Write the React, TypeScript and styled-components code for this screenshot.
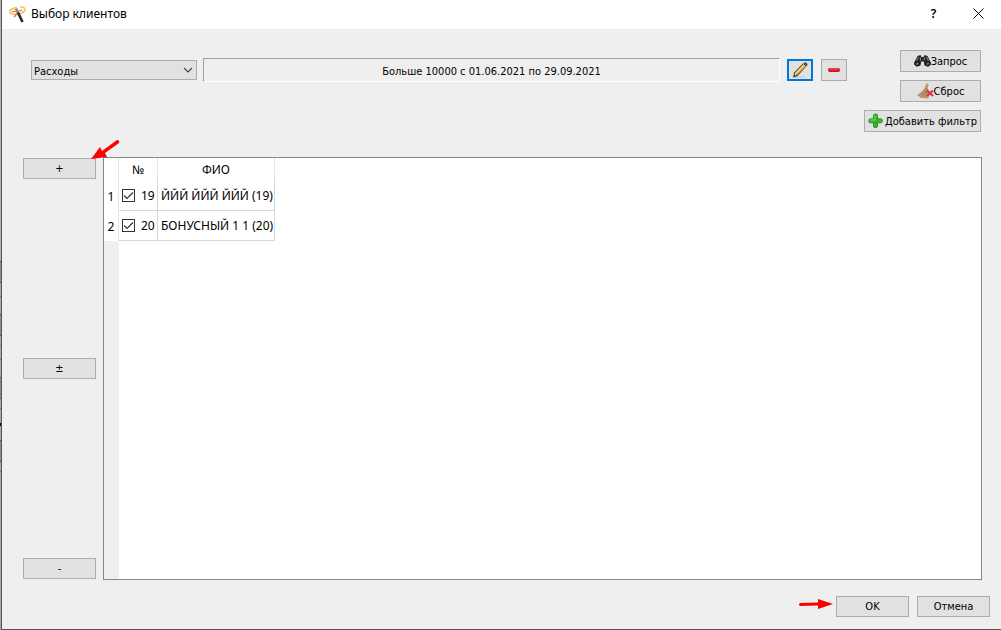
import React from "react";
import styled, { createGlobalStyle } from "styled-components";

const GlobalStyle = createGlobalStyle`
  * { box-sizing: border-box; }
  body { margin: 0; background: #efefef; }
`;

const uiFont = `11px "DejaVu Sans Condensed", "DejaVu Sans", sans-serif`;
const systemFont = `12px "Noto Sans", "Open Sans", sans-serif`;

const Backdrop = styled.div`
  min-height: 100vh;
  display: flex;
  padding-left: 1px;
  background: linear-gradient(
    #b4b4b4 261px, #555 261px 262px, #8c8c8c 262px 282px, #555 282px 283px,
    #a8a8a8 283px 296px, #777 296px 297px, #a8a8a8 297px 314px, #555 314px 315px,
    #8c8c8c 315px 335px, #555 335px 336px, #a8a8a8 336px 345px, #777 345px 346px,
    #a8a8a8 346px 359px, #777 359px 360px, #a8a8a8 360px 377px, #555 377px 378px,
    #8c8c8c 378px 398px, #555 398px 399px, #a8a8a8 399px 408px, #777 408px 409px,
    #a8a8a8 409px 423px, #000 423px 426px, #a8a8a8 426px 440px, #555 440px 441px,
    #8c8c8c 441px 461px, #555 461px 462px, #a8a8a8 462px 471px, #777 471px 472px,
    #a8a8a8 472px
  );
`;

const Dialog = styled.main`
  flex: 1;
  display: flex;
  flex-direction: column;
  background: #efefef;
  border-left: 1px solid #565656;
  border-bottom: 1px solid #565656;
  font: ${uiFont};
  color: #000;
`;

const TitleBar = styled.header`
  display: flex;
  align-items: center;
  height: 29px;
  padding: 0 0 2px 7px;
  background: #fff;
`;

const Title = styled.h1`
  flex: 1;
  margin: 0 0 0 5px;
  font: ${systemFont};
`;

const WindowButton = styled.button`
  width: 45px;
  height: 27px;
  padding: 0;
  display: flex;
  align-items: center;
  justify-content: center;
  border: 0;
  background: transparent;
  font: ${systemFont};
  font-weight: 600;
`;

const FilterBar = styled.section`
  display: flex;
  align-items: flex-start;
  padding: 21px 20px 0 29px;
`;

const FilterRow = styled.div`
  flex: 1;
  display: flex;
  align-items: center;
  margin-top: 8px;
`;

const SelectBox = styled.div`
  position: relative;
  width: 166px;
  margin-right: 6px;

  svg {
    position: absolute;
    right: 4px;
    top: 7px;
    pointer-events: none;
  }
`;

const Select = styled.select`
  display: block;
  appearance: none;
  width: 100%;
  height: 20px;
  padding: 2px 20px 0 2px;
  border: 1px solid #adadad;
  border-radius: 0;
  background: #e1e1e1;
  color: #000;
  font: ${uiFont};
`;

const Condition = styled.output`
  flex: 1;
  height: 24px;
  border: 1px solid;
  border-color: #a0a0a0 #fff #fff #a0a0a0;
  line-height: 25px;
  text-align: center;
`;

const Button = styled.button<{ $width?: number; $height?: number; $focused?: boolean; $gap?: number }>`
  display: flex;
  align-items: center;
  justify-content: center;
  gap: ${(p) => p.$gap ?? 0}px;
  width: ${(p) => (p.$width ? `${p.$width}px` : "auto")};
  height: ${(p) => p.$height ?? 21}px;
  padding: 0;
  border: ${(p) => (p.$focused ? "2px solid #0078d7" : "1px solid #adadad")};
  background: #e1e1e1;
  color: #000;
  font: ${uiFont};
  white-space: nowrap;

  svg { flex: none; }
`;

const RowActions = styled.div`
  display: flex;
  gap: 8px;
  padding-left: 7px;
`;

const QueryActions = styled.div`
  display: flex;
  flex-direction: column;
  align-items: flex-end;
  gap: 8px;
  margin-left: 17px;
`;

const Content = styled.section`
  flex: 1;
  display: flex;
  gap: 7px;
  padding: 25px 19px 0 21px;
`;

const SelectionButtons = styled.div`
  display: flex;
  flex-direction: column;
  justify-content: space-between;
  padding: 1px 0;
`;

const Pointed = styled.div`
  position: relative;
`;

const Arrow = styled.svg<{ $left: number; $top: number }>`
  position: absolute;
  left: ${(p) => p.$left}px;
  top: ${(p) => p.$top}px;
  pointer-events: none;
  fill: #ff0000;
`;

const TablePanel = styled.div`
  flex: 1;
  border: 1px solid #828790;
  background: linear-gradient(to right, #efefef 15px, #fff 15px);
`;

const Table = styled.table`
  table-layout: fixed;
  width: 171px;
  border-collapse: separate;
  border-spacing: 0;
  background: #fff;
  font: ${systemFont};

  th, td {
    padding: 0;
    border-right: 1px solid #d8d8d8;
    font-weight: 400;
    white-space: nowrap;
  }
  th { border-color: #e5e5e5; }
  thead th { height: 23px; }
  tbody td { height: 30px; border-bottom: 1px solid #d8d8d8; }
  tbody td + td { padding-left: 3px; }
`;

const CheckLabel = styled.label`
  display: flex;
  align-items: center;
  gap: 6px;
  padding-left: 3px;
`;

const CheckBox = styled.input`
  appearance: none;
  width: 13px;
  height: 13px;
  margin: 0;
  border: 1px solid #333;
  background: #fff;

  &:checked {
    background: #fff url("data:image/svg+xml,%3Csvg xmlns='http://www.w3.org/2000/svg' viewBox='0 0 11 11'%3E%3Cpath d='M1 5.5L4 8.5L10 2.5' fill='none' stroke='%23333' stroke-width='1.2'/%3E%3C/svg%3E");
  }
`;

const Footer = styled.footer`
  display: flex;
  justify-content: flex-end;
  gap: 8px;
  padding: 16px 11px 12px;
`;

const WandIcon = () => (
  <svg width="17" height="18" viewBox="0 0 17 18" fill="none" aria-hidden="true">
    <path d="M8 2.5C3 3 .5 5 1 7s4 2.600 8 2 7-2.500 7-4.500S14 1.500 11 2" stroke="#f9b560" strokeWidth="1.4" />
    <path d="M1.500 6.500C3 4.500 5 4 7 4M12 7c2-.7 3-1.500 3.500-2.500" stroke="#ffd75e" />
    <path d="M8.500 6.500L13.500 17" stroke="#262626" strokeWidth="2.600" />
    <path d="M7 3.500l2 4" stroke="#8d8d8d" strokeWidth="2.600" />
    <path d="M3 7l4-1M5 12l3-3M10 6l3-1" stroke="#df6b2f" strokeWidth="1.2" />
  </svg>
);

const PencilIcon = () => (
  <svg width="16" height="16" viewBox="0 0 16 16" aria-hidden="true">
    <path d="M3 15h10" stroke="#c8c8c8" />
    <path d="M1 15.500l1.200-5L11.500 1l3.500 2.500L5.500 14z" fill="#383321" />
    <path d="M3 11L11.200 2.600l2.200 1.800L5.200 12.900z" fill="#e2b640" />
    <path d="M3.700 11.300L11.800 3.200" stroke="#f8df83" strokeWidth="1.2" />
    <path d="M2.300 12.500l.7-1.800 2 2-1.500 1z" fill="#ddc9a3" />
    <path d="M10.800 2l3 2.500" stroke="#b7b7b7" />
    <path d="M12 .8l1.500-.6L15.600 2 15 3.500z" fill="#3a3532" />
  </svg>
);

const MinusIcon = () => (
  <svg width="16" height="16" viewBox="0 0 16 16" aria-hidden="true">
    <rect x="2.500" y="6.500" width="11" height="3" rx="1" fill="#e01523" stroke="#c01924" />
    <path d="M3.500 7h9" stroke="#f1646b" />
  </svg>
);

const BinocularsIcon = () => (
  <svg width="17" height="16" viewBox="0 0 17 16" aria-hidden="true">
    <path d="M3.500 3L6.500 2l1 2h2l1-2 3 1 3.300 6.500v2L14 13.500l-3.500-1-.8-4H7.300l-.8 4-3.500 1-2.800-2v-2z" fill="#292929" />
    <path d="M4.500 4L2.500 8M12.500 4l2 4M6.500 4.500v3M10.500 4.500v2.500" stroke="#8b8582" />
    <ellipse cx="3.200" cy="10.700" rx="2.300" ry="2.300" fill="#50433d" stroke="#111" />
    <ellipse cx="13.800" cy="10.700" rx="2.300" ry="2.300" fill="#50433d" stroke="#111" />
    <path d="M2.500 11.500L4 10M13 11.500l1.500-1.500" stroke="#b28d77" />
  </svg>
);

const BroomIcon = () => (
  <svg width="17" height="16" viewBox="0 0 17 16" aria-hidden="true">
    <path d="M9.500 0l2 1-.7 5 1.700 3-1 6.500L4 15l-4-3 5-3.500 2.500-3.500z" fill="#bd9b78" />
    <path d="M2 12.500L8 7M4.500 14L9 7.500M8 14.500l2-7M8.500 5.500l2.500 1" stroke="#94714f" strokeWidth=".8" />
    <path d="M10 7.500l6 5.500M16 7.500L10 13" stroke="#e13437" strokeWidth="2.200" />
  </svg>
);

const PlusIcon = () => (
  <svg width="16" height="16" viewBox="0 0 16 16" aria-hidden="true">
    <rect x="5.500" y="1" width="4" height="13.500" rx="1.500" fill="#35b52c" stroke="#2b9a2b" />
    <rect x=".8" y="5.800" width="13.500" height="4" rx="1.500" fill="#35b52c" stroke="#2b9a2b" />
    <path d="M6 6.300h3v3H6z" fill="#35b52c" />
    <path d="M7 2.500V7H2.500" fill="none" stroke="#83dc74" />
  </svg>
);

const clients = [
  { id: 19, name: "ЙЙЙ ЙЙЙ ЙЙЙ (19)" },
  { id: 20, name: "БОНУСНЫЙ 1 1 (20)" },
];

export default function App() {
  return (
    <Backdrop>
      <GlobalStyle />
      <Dialog>
        <TitleBar>
          <WandIcon />
          <Title>Выбор клиентов</Title>
          <WindowButton aria-label="Справка">?</WindowButton>
          <WindowButton aria-label="Закрыть">
            <svg width="11" height="11" viewBox="0 0 11 11" aria-hidden="true">
              <path d="M.5.5l10 10M10.5.5l-10 10" stroke="#000" />
            </svg>
          </WindowButton>
        </TitleBar>

        <FilterBar>
          <FilterRow>
            <SelectBox>
              <Select aria-label="Фильтр" defaultValue="Расходы">
                <option>Расходы</option>
              </Select>
              <svg width="10" height="7" viewBox="0 0 10 7" aria-hidden="true">
                <path d="M1 1l4 4 4-4" fill="none" stroke="#444" strokeWidth="1.1" />
              </svg>
            </SelectBox>
            <Condition>Больше 10000 с 01.06.2021 по 29.09.2021</Condition>
            <RowActions>
              <Button $width={26} $height={22} $focused aria-label="Изменить"><PencilIcon /></Button>
              <Button $width={26} $height={22} aria-label="Удалить"><MinusIcon /></Button>
            </RowActions>
          </FilterRow>
          <QueryActions>
            <Button $width={81} $height={22}><BinocularsIcon />Запрос</Button>
            <Button $width={81} $height={22}><BroomIcon />Сброс</Button>
            <Button $width={117} $height={22} $gap={1}><PlusIcon />Добавить фильтр</Button>
          </QueryActions>
        </FilterBar>

        <Content>
          <SelectionButtons>
            <Pointed>
              <Button $width={73}>+</Button>
              <Arrow $left={68} $top={-18} width="30" height="20" viewBox="0 0 30 20" aria-hidden="true">
                <path d="M0 19L9 7l2 4L26 0q3 0 2 3L14 13l2 4z" />
              </Arrow>
            </Pointed>
            <Button $width={73}>±</Button>
            <Button $width={73}>-</Button>
          </SelectionButtons>
          <TablePanel>
            <Table>
              <colgroup>
                <col style={{ width: 15 }} />
                <col style={{ width: 39 }} />
                <col style={{ width: 117 }} />
              </colgroup>
              <thead>
                <tr>
                  <th />
                  <th scope="col">№</th>
                  <th scope="col">ФИО</th>
                </tr>
              </thead>
              <tbody>
                {clients.map((client, index) => (
                  <tr key={client.id}>
                    <th scope="row">{index + 1}</th>
                    <td>
                      <CheckLabel>
                        <CheckBox type="checkbox" defaultChecked />
                        {client.id}
                      </CheckLabel>
                    </td>
                    <td>{client.name}</td>
                  </tr>
                ))}
              </tbody>
            </Table>
          </TablePanel>
        </Content>

        <Footer>
          <Pointed>
            <Button $width={73}>OK</Button>
            <Arrow $left={-38} $top={2} width="36" height="12" viewBox="0 0 36 12" aria-hidden="true">
              <path d="M2 5l18-.5V1l15 5-15 5V7.500L2 8q-2-1.500 0-3z" />
            </Arrow>
          </Pointed>
          <Button $width={73}>Отмена</Button>
        </Footer>
      </Dialog>
    </Backdrop>
  );
}
